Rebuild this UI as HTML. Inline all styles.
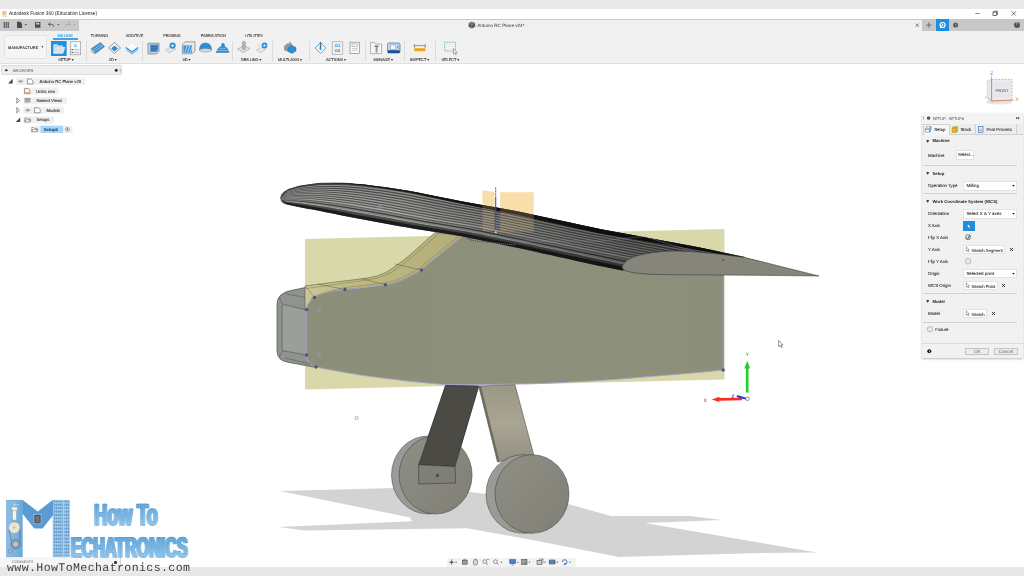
<!DOCTYPE html>
<html lang="en">
<head>
<meta charset="utf-8">
<title>Autodesk Fusion 360 (Education License)</title>
<style>
*{box-sizing:border-box;margin:0;padding:0}
html,body{width:1024px;height:576px;overflow:hidden;background:#fff;text-rendering:geometricPrecision;font-family:"Liberation Sans",sans-serif;color:#333}
.abs{position:absolute}
#root{position:absolute;left:0;top:0;width:1024px;height:576px;overflow:hidden;will-change:transform}
#topstrip{left:0;top:0;width:1024px;height:9px;background:#e9e9e9}
#titlebar{left:0;top:9px;width:1024px;height:9.5px;background:#fff}
#titlebar .t{left:9px;top:2px;font-size:5.5px;line-height:7px;color:#222;white-space:nowrap;transform:scaleX(.865);transform-origin:0 0}
#qat{left:0;top:18.5px;width:1024px;height:12.5px;background:#f0f0f0;border-top:1px solid #c9c9c9}
#qatdark{left:0;top:19px;width:79px;height:12px;background:#c9c9c9}
#ribbon{left:0;top:31px;width:1024px;height:32.5px;background:#f1f1f1;border-bottom:1px solid #e0e0e0}
.tab,.grp,.pl,.box{-webkit-text-stroke:0.1px currentColor}
.tab{font-size:3.9px;line-height:5px;color:#444;white-space:nowrap;letter-spacing:-0.05px}
.grp{font-size:3.9px;line-height:5px;color:#333;white-space:nowrap;letter-spacing:-0.05px}
.sep{width:1px;background:#dcdcdc;top:41px;height:20px}
#browserhdr{left:1px;top:65px;width:121px;height:10px;background:#eeeeee;border:0.5px solid #dedede;border-radius:1px}
.brow{font-size:4.2px;line-height:6px;color:#333;white-space:nowrap;background:#f0f0f0;height:7px;padding-top:0.6px}
#bottombar{left:0;top:567px;width:1024px;height:9px;background:#e8e8e8}
#panel{left:922px;top:113px;width:100.5px;height:244.5px;background:#f1f1f1;box-shadow:0 0.5px 2px rgba(0,0,0,.28)}
.pl{font-size:4.25px;line-height:5px;color:#333;white-space:nowrap;letter-spacing:-0.03px}
.ph{font-size:4.3px;line-height:5px;color:#222;font-weight:bold;white-space:nowrap}
.box{background:#fff;border:0.5px solid #e3e3e3;font-size:4.1px;line-height:5px;color:#333;white-space:nowrap}
#panel .pl{font-size:4.4px}#panel .box{font-size:4.4px}
.psep{left:1px;width:94px;height:1.2px;background:#d2d2d2}
</style>
</head>
<body>
<div id="root">
<div class="abs" id="topstrip"></div>
<div class="abs" id="titlebar"><div class="abs t">Autodesk Fusion 360 (Education License)</div></div>
<div class="abs" id="qat"></div>
<div class="abs" id="qatdark"></div>
<div class="abs" id="ribbon"></div>
<div class="abs" id="browserhdr"></div>
<div class="abs" id="bottombar"></div>
<svg class="abs" style="left:0;top:0" width="1024" height="576" viewBox="0 0 1024 576">
<defs>
<linearGradient id="fus" x1="0" y1="0" x2="1" y2="0">
<stop offset="0" stop-color="#8b8f78"/><stop offset="0.5" stop-color="#8d917c"/><stop offset="1" stop-color="#8c907b"/>
</linearGradient>
<linearGradient id="wheel" x1="0" y1="0" x2="1" y2="1">
<stop offset="0" stop-color="#8f8f86"/><stop offset="1" stop-color="#7f7f76"/>
</linearGradient>
<linearGradient id="legR" x1="0" y1="0" x2="0" y2="1">
<stop offset="0" stop-color="#9a9782"/><stop offset="0.5" stop-color="#a9a594"/><stop offset="1" stop-color="#939083"/>
</linearGradient>
<linearGradient id="wingg" gradientUnits="userSpaceOnUse" x1="400" y1="189" x2="392" y2="226">
<stop offset="0" stop-color="#2a2a2a"/><stop offset="0.12" stop-color="#4c4c4a"/><stop offset="0.3" stop-color="#747472"/><stop offset="0.55" stop-color="#6a6a68"/><stop offset="0.8" stop-color="#5a5a58"/><stop offset="0.92" stop-color="#3a3a38"/><stop offset="1" stop-color="#555"/>
</linearGradient>
<linearGradient id="wdark" gradientUnits="userSpaceOnUse" x1="400" y1="0" x2="640" y2="0"><stop offset="0" stop-color="#000" stop-opacity="0"/><stop offset="1" stop-color="#000" stop-opacity="0.34"/></linearGradient>
<linearGradient id="strip" gradientUnits="userSpaceOnUse" x1="305" y1="0" x2="462" y2="0"><stop offset="0" stop-color="#cbc793"/><stop offset="0.3" stop-color="#bfba85"/><stop offset="1" stop-color="#b2ad79"/></linearGradient>
</defs>
<!-- shadows -->
<polygon fill="#d3d3d3" points="280,491 395,488 470,492 568,504 611,516 690,516 722,520 645,523 817,552.5 761,553 619,557 540,541.5 467,528.2 305,530.5 278.5,527 412,521.2 410,517.4"/>
<!-- yellow stock plane -->
<polygon fill="#d9d8ab" points="305,239 724.5,229 724.5,379.5 305,389.5"/>
<!-- nose box -->
<path d="M306,287.3 L292,290.3 Q277,293 277,304 L277,351 Q277,360.5 288,362.3 L316,367.4 L307,355 L307,310 Z" fill="#8f948e" stroke="#3c3c3a" stroke-width="0.6"/>
<path d="M284,304.6 Q282,304.4 282,306.5 L282,348.5 Q282,350.6 284,350.9 L306.8,355 L306.8,310 Z" fill="#9a9f9a" stroke="#3c3c3a" stroke-width="0.45"/>
<path d="M285,293.6 L305.5,297.6 M285,358 L310,364 M279.5,297 Q280,302 283,304.5 M279.5,357 Q280,353 283,350.8" fill="none" stroke="#3c3c3a" stroke-width="0.4"/>
<!-- fuselage top strip -->
<path d="M305,286 Q335,282 360,279 Q380,277 390,270 Q400,263 410,255 L435,232.5 L462.5,236 L421,270 Q400,283 385,285 Q360,288 345,289.5 Q320,292 314,297.5 Q307,303 306.5,310 L305,310 Z" fill="url(#strip)" stroke="#4a4a3c" stroke-width="0.5"/>
<path d="M361.5,278.6 L385.5,284.8 M395,264 L421.5,270 M317.6,284 L345,289.5 M305.3,286 L314.5,297.5" fill="none" stroke="#55553c" stroke-width="0.45"/>
<path d="M305.5,288.6 Q335,284.6 361,280.8 Q381,278.6 392,272.2 Q402,265 412,257 L437.5,234.6 M310,299 Q316,294 345,287.4 Q362,285.6 385,282.8 Q400,280.8 420,267.6 L459.5,235.6" fill="none" stroke="#6a683c" stroke-width="0.4"/>
<!-- fuselage side -->
<path d="M306.7,310 Q307,303 314,297.5 Q320,292 345,289.5 Q360,288 385,285 Q400,283 421,270 L462.5,236 L516,244 L723.2,262 L723.2,370 Q690,373.5 650,376.5 Q600,381 575,381.8 Q540,384 516,384 Q480,385 445,384.5 Q410,382 360,375 Q330,370 316,367 Q307,364 306.7,355 Z" fill="url(#fus)" stroke="#a8a0cc" stroke-width="0.9"/>
<line x1="723.5" y1="260.5" x2="723.5" y2="370" stroke="#948cc6" stroke-width="1.1"/>
<!-- legs -->
<polygon points="445.5,385.5 478.7,386 455,466.5 418.7,464.7" fill="#4b4a45" stroke="#2c2c2a" stroke-width="0.5"/>
<!-- left wheel -->
<ellipse cx="428" cy="475" rx="36.5" ry="39" fill="#9a9b96" stroke="#3a3a38" stroke-width="0.5"/>
<ellipse cx="435.6" cy="475" rx="36.5" ry="39" fill="url(#wheel)" stroke="#3a3a38" stroke-width="0.5"/>
<polygon points="445.5,385.5 478.7,386 455,466.5 418.7,464.7" fill="#4b4a45" stroke="#2c2c2a" stroke-width="0.5"/>
<polygon points="418.7,464.7 455,466.5 455.7,483 418.7,484" fill="#7f7f75" stroke="#2c2c2a" stroke-width="0.5"/>
<circle cx="437.5" cy="475.5" r="1.3" fill="#555" stroke="#222" stroke-width="0.4"/>
<polygon points="478.7,386 515,384.7 533.7,454.7 497.5,462" fill="url(#legR)" stroke="#3a3a36" stroke-width="0.5"/>
<polygon points="478.7,386 481,386 499.5,461.5 497.5,462" fill="#6d6a5e"/>
<!-- right wheel -->
<ellipse cx="523" cy="494" rx="37" ry="39.3" fill="#9a9b96" stroke="#3a3a38" stroke-width="0.5"/>
<ellipse cx="532" cy="494" rx="37" ry="39.3" fill="url(#wheel)" stroke="#3a3a38" stroke-width="0.5"/>
<g fill="#fbe1b2">
<polygon points="482.5,190.2 494.5,192 494.5,231 482.5,231"/><polygon points="500.2,192.3 533.8,192.3 533.8,231 500.2,231"/>
</g>
<!-- wing -->
<path d="M280.8,197.5 L281.5,194.5 L284.0,191.8 L289.0,189.2 L300.0,186.0 L320.0,183.3 L310.0,209.0 L300.0,207.0 L291.0,205.2 L284.0,203.4 L281.5,201.5 L280.8,198.5 Z" fill="#5c5c5a" stroke="#333" stroke-width="0.5" stroke-linejoin="round"/>
<path d="M280.8,197.5 L287.8,189.8 L298.4,186.5 L309.3,184.7 L320.2,183.3 L331.3,183.1 L342.4,183.1 L353.4,183.7 L364.5,184.5 L375.5,185.9 L386.4,187.2 L397.4,189.0 L408.3,190.7 L419.2,192.8 L430.0,195.0 L440.9,197.2 L451.7,199.3 L462.6,201.5 L473.5,203.4 L484.4,205.4 L495.3,207.3 L506.2,209.3 L517.1,211.2 L527.9,213.6 L538.7,215.9 L549.6,218.2 L560.4,220.5 L571.2,222.8 L582.0,225.2 L592.9,227.5 L603.7,229.7 L614.6,231.7 L625.5,233.7 L636.4,235.7 L647.3,237.7 L658.1,239.8 L669.0,241.8 L679.9,243.8 L690.8,245.8 L701.7,247.9 L712.5,250.1 L723.3,252.4 L734.2,254.7 L745.0,257.0 L622.5,270.5 L614.5,268.9 L606.5,267.3 L598.5,265.7 L590.5,263.9 L582.5,262.2 L574.5,260.4 L566.5,258.6 L558.6,256.9 L550.6,255.1 L542.6,253.4 L534.6,251.6 L526.6,249.8 L518.7,248.1 L510.7,246.4 L502.7,244.8 L494.7,243.1 L486.7,241.5 L478.6,239.8 L470.6,238.2 L462.6,236.5 L454.6,235.1 L446.5,233.8 L438.5,232.6 L430.4,231.3 L422.3,230.0 L414.2,228.7 L406.2,227.3 L398.1,225.9 L390.1,224.4 L382.1,223.0 L374.0,221.5 L366.0,220.1 L357.9,218.6 L349.9,217.0 L341.9,215.4 L333.9,213.8 L325.9,212.2 L317.9,210.6 L309.9,209.0 L301.9,207.4 L293.8,205.8 L285.9,203.9 L280.8,198.5 Z" fill="#666664"/>
<path d="M280.8,197.5 L287.8,189.8 L298.4,186.5 L309.3,184.7 L320.2,183.3 L331.3,183.1 L342.4,183.1 L353.4,183.7 L364.5,184.5 L375.5,185.9 L386.4,187.2 L397.4,189.0 L408.3,190.7 L419.2,192.8 L430.0,195.0 L440.9,197.2 L451.7,199.3 L462.6,201.5 L473.5,203.4 L484.4,205.4 L495.3,207.3 L506.2,209.3 L517.1,211.2 L527.9,213.6 L538.7,215.9 L549.6,218.2 L560.4,220.5 L571.2,222.8 L582.0,225.2 L592.9,227.5 L603.7,229.7 L614.6,231.7 L625.5,233.7 L636.4,235.7 L647.3,237.7 L658.1,239.8 L669.0,241.8 L679.9,243.8 L690.8,245.8 L701.7,247.9 L712.5,250.1 L723.3,252.4 L734.2,254.7 L745.0,257.0 L740.1,257.5 L729.4,255.3 L718.7,253.0 L707.9,250.8 L697.2,248.5 L686.5,246.5 L675.7,244.4 L664.9,242.4 L654.2,240.4 L643.4,238.4 L632.6,236.4 L621.8,234.4 L611.1,232.4 L600.3,230.4 L589.6,228.2 L578.9,225.9 L568.2,223.6 L557.4,221.4 L546.7,219.1 L536.0,216.8 L525.3,214.5 L514.6,212.2 L503.8,210.2 L493.0,208.3 L482.2,206.4 L471.5,204.5 L460.7,202.6 L449.9,200.5 L439.2,198.3 L428.4,196.2 L417.7,194.0 L406.9,192.0 L396.1,190.2 L385.3,188.5 L374.4,187.1 L363.6,185.8 L352.7,184.9 L341.7,184.3 L330.8,184.2 L319.8,184.3 L309.0,185.7 L298.2,187.2 L287.7,190.4 L280.8,197.5 Z" fill="#444442"/>
<path d="M280.8,197.5 L287.7,190.4 L298.2,187.2 L309.0,185.7 L319.8,184.3 L330.8,184.2 L341.7,184.3 L352.7,184.9 L363.6,185.8 L374.4,187.1 L385.3,188.5 L396.1,190.2 L406.9,192.0 L417.7,194.0 L428.4,196.2 L439.2,198.3 L449.9,200.5 L460.7,202.6 L471.5,204.5 L482.2,206.4 L493.0,208.3 L503.8,210.2 L514.6,212.2 L525.3,214.5 L536.0,216.8 L546.7,219.1 L557.4,221.4 L568.2,223.6 L578.9,225.9 L589.6,228.2 L600.3,230.4 L611.1,232.4 L621.8,234.4 L632.6,236.4 L643.4,238.4 L654.2,240.4 L664.9,242.4 L675.7,244.4 L686.5,246.5 L697.2,248.5 L707.9,250.8 L718.7,253.0 L729.4,255.3 L740.1,257.5 L720.5,259.7 L710.2,257.6 L700.0,255.4 L689.7,253.2 L679.4,251.1 L669.1,249.1 L658.8,247.1 L648.5,245.1 L638.2,243.2 L627.9,241.2 L617.6,239.3 L607.3,237.3 L597.0,235.3 L586.7,233.4 L576.4,231.3 L566.2,229.1 L555.9,226.9 L545.6,224.7 L535.4,222.5 L525.1,220.3 L514.9,218.2 L504.6,216.0 L494.3,214.2 L483.9,212.4 L473.6,210.5 L463.3,208.7 L452.9,206.9 L442.6,204.9 L432.3,202.9 L422.0,200.9 L411.8,198.9 L401.5,196.9 L391.1,195.2 L380.7,193.5 L370.4,192.1 L360.0,190.7 L349.5,189.7 L339.1,188.9 L328.6,188.6 L318.2,188.4 L307.8,189.3 L297.5,190.3 L287.4,192.6 L280.8,197.7 Z" fill="#6c6e6a"/>
<path d="M280.8,197.7 L287.4,192.6 L297.5,190.3 L307.8,189.3 L318.2,188.4 L328.6,188.6 L339.1,188.9 L349.5,189.7 L360.0,190.7 L370.4,192.1 L380.7,193.5 L391.1,195.2 L401.5,196.9 L411.8,198.9 L422.0,200.9 L432.3,202.9 L442.6,204.9 L452.9,206.9 L463.3,208.7 L473.6,210.5 L483.9,212.4 L494.3,214.2 L504.6,216.0 L514.9,218.2 L525.1,220.3 L535.4,222.5 L545.6,224.7 L555.9,226.9 L566.2,229.1 L576.4,231.3 L586.7,233.4 L597.0,235.3 L607.3,237.3 L617.6,239.3 L627.9,241.2 L638.2,243.2 L648.5,245.1 L658.8,247.1 L669.1,249.1 L679.4,251.1 L689.7,253.2 L700.0,255.4 L710.2,257.6 L720.5,259.7 L708.2,261.0 L698.3,259.0 L688.3,256.9 L678.3,254.8 L668.3,252.7 L658.3,250.7 L648.3,248.8 L638.3,246.8 L628.3,244.9 L618.3,243.0 L608.2,241.0 L598.2,239.1 L588.2,237.1 L578.2,235.2 L568.2,233.2 L558.2,231.0 L548.2,228.9 L538.3,226.8 L528.3,224.7 L518.3,222.6 L508.3,220.4 L498.3,218.4 L488.3,216.6 L478.2,214.9 L468.2,213.1 L458.1,211.4 L448.1,209.6 L438.1,207.7 L428.1,205.8 L418.1,203.8 L408.0,201.9 L398.0,200.0 L388.0,198.3 L377.9,196.6 L367.8,195.2 L357.7,193.8 L347.6,192.7 L337.4,191.8 L327.3,191.4 L317.1,191.0 L307.0,191.5 L297.0,192.3 L287.2,194.0 L280.8,197.8 Z" fill="#747672"/>
<path d="M280.8,197.8 L287.2,194.0 L297.0,192.3 L307.0,191.5 L317.1,191.0 L327.3,191.4 L337.4,191.8 L347.6,192.7 L357.7,193.8 L367.8,195.2 L377.9,196.6 L388.0,198.3 L398.0,200.0 L408.0,201.9 L418.1,203.8 L428.1,205.8 L438.1,207.7 L448.1,209.6 L458.1,211.4 L468.2,213.1 L478.2,214.9 L488.3,216.6 L498.3,218.4 L508.3,220.4 L518.3,222.6 L528.3,224.7 L538.3,226.8 L548.2,228.9 L558.2,231.0 L568.2,233.2 L578.2,235.2 L588.2,237.1 L598.2,239.1 L608.2,241.0 L618.3,243.0 L628.3,244.9 L638.3,246.8 L648.3,248.8 L658.3,250.7 L668.3,252.7 L678.3,254.8 L688.3,256.9 L698.3,259.0 L708.2,261.0 L671.5,265.1 L662.4,263.2 L653.2,261.3 L644.1,259.5 L635.0,257.5 L625.8,255.6 L616.7,253.8 L607.5,251.9 L598.4,250.0 L589.3,248.2 L580.1,246.3 L571.0,244.5 L561.8,242.6 L552.7,240.7 L543.5,238.8 L534.4,236.9 L525.3,235.0 L516.1,233.1 L507.0,231.2 L497.9,229.3 L488.7,227.3 L479.6,225.6 L470.4,224.0 L461.2,222.5 L452.0,220.9 L442.8,219.3 L433.6,217.8 L424.4,216.1 L415.2,214.4 L406.1,212.7 L396.9,210.9 L387.7,209.2 L378.5,207.6 L369.3,206.0 L360.1,204.5 L350.9,203.0 L341.7,201.7 L332.5,200.6 L323.3,199.6 L314.0,198.7 L304.8,198.3 L295.6,198.1 L286.7,198.3 L280.8,198.1 Z" fill="#7e807c"/>
<path d="M280.8,198.1 L286.7,198.3 L295.6,198.1 L304.8,198.3 L314.0,198.7 L323.3,199.6 L332.5,200.6 L341.7,201.7 L350.9,203.0 L360.1,204.5 L369.3,206.0 L378.5,207.6 L387.7,209.2 L396.9,210.9 L406.1,212.7 L415.2,214.4 L424.4,216.1 L433.6,217.8 L442.8,219.3 L452.0,220.9 L461.2,222.5 L470.4,224.0 L479.6,225.6 L488.7,227.3 L497.9,229.3 L507.0,231.2 L516.1,233.1 L525.3,235.0 L534.4,236.9 L543.5,238.8 L552.7,240.7 L561.8,242.6 L571.0,244.5 L580.1,246.3 L589.3,248.2 L598.4,250.0 L607.5,251.9 L616.7,253.8 L625.8,255.6 L635.0,257.5 L644.1,259.5 L653.2,261.3 L662.4,263.2 L671.5,265.1 L659.2,266.4 L650.4,264.6 L641.5,262.8 L632.7,261.0 L623.8,259.1 L615.0,257.2 L606.1,255.4 L597.3,253.6 L588.4,251.7 L579.6,249.9 L570.7,248.1 L561.9,246.2 L553.0,244.4 L544.2,242.6 L535.3,240.7 L526.5,238.9 L517.6,237.0 L508.8,235.2 L499.9,233.3 L491.1,231.5 L482.2,229.6 L473.3,228.0 L464.4,226.5 L455.5,225.0 L446.6,223.5 L437.7,222.0 L428.8,220.5 L419.9,218.9 L411.0,217.3 L402.1,215.6 L393.2,213.9 L384.3,212.3 L375.4,210.7 L366.5,209.2 L357.6,207.6 L348.7,206.1 L339.8,204.7 L330.8,203.5 L321.9,202.3 L313.0,201.3 L304.1,200.6 L295.2,200.0 L286.5,199.7 L280.8,198.2 Z" fill="#969894"/>
<path d="M280.8,198.2 L286.5,199.7 L295.2,200.0 L304.1,200.6 L313.0,201.3 L321.9,202.3 L330.8,203.5 L339.8,204.7 L348.7,206.1 L357.6,207.6 L366.5,209.2 L375.4,210.7 L384.3,212.3 L393.2,213.9 L402.1,215.6 L411.0,217.3 L419.9,218.9 L428.8,220.5 L437.7,222.0 L446.6,223.5 L455.5,225.0 L464.4,226.5 L473.3,228.0 L482.2,229.6 L491.1,231.5 L499.9,233.3 L508.8,235.2 L517.6,237.0 L526.5,238.9 L535.3,240.7 L544.2,242.6 L553.0,244.4 L561.9,246.2 L570.7,248.1 L579.6,249.9 L588.4,251.7 L597.3,253.6 L606.1,255.4 L615.0,257.2 L623.8,259.1 L632.7,261.0 L641.5,262.8 L650.4,264.6 L659.2,266.4 L647.0,267.8 L638.4,266.1 L629.8,264.3 L621.3,262.6 L612.7,260.7 L604.2,258.9 L595.6,257.1 L587.0,255.3 L578.5,253.5 L569.9,251.7 L561.4,249.8 L552.8,248.0 L544.2,246.2 L535.7,244.4 L527.1,242.6 L518.5,240.8 L510.0,239.1 L501.4,237.3 L492.8,235.5 L484.3,233.7 L475.7,231.9 L467.1,230.4 L458.5,228.9 L449.8,227.5 L441.2,226.1 L432.6,224.7 L423.9,223.2 L415.3,221.7 L406.7,220.1 L398.1,218.5 L389.5,216.9 L380.9,215.4 L372.3,213.9 L363.6,212.3 L355.0,210.8 L346.4,209.2 L337.8,207.8 L329.2,206.4 L320.6,205.1 L311.9,203.8 L303.3,202.8 L294.7,201.9 L286.3,201.1 L280.8,198.3 Z" fill="#5a5c58"/>
<path d="M280.8,198.3 L286.3,201.1 L294.7,201.9 L303.3,202.8 L311.9,203.8 L320.6,205.1 L329.2,206.4 L337.8,207.8 L346.4,209.2 L355.0,210.8 L363.6,212.3 L372.3,213.9 L380.9,215.4 L389.5,216.9 L398.1,218.5 L406.7,220.1 L415.3,221.7 L423.9,223.2 L432.6,224.7 L441.2,226.1 L449.8,227.5 L458.5,228.9 L467.1,230.4 L475.7,231.9 L484.3,233.7 L492.8,235.5 L501.4,237.3 L510.0,239.1 L518.5,240.8 L527.1,242.6 L535.7,244.4 L544.2,246.2 L552.8,248.0 L561.4,249.8 L569.9,251.7 L578.5,253.5 L587.0,255.3 L595.6,257.1 L604.2,258.9 L612.7,260.7 L621.3,262.6 L629.8,264.3 L638.4,266.1 L647.0,267.8 L642.1,268.3 L633.6,266.6 L625.2,264.9 L616.7,263.2 L608.3,261.3 L599.8,259.5 L591.4,257.7 L582.9,255.9 L574.5,254.1 L566.0,252.3 L557.6,250.5 L549.2,248.7 L540.7,246.9 L532.3,245.1 L523.8,243.4 L515.4,241.6 L506.9,239.9 L498.5,238.1 L490.0,236.4 L481.5,234.6 L473.1,232.9 L464.6,231.3 L456.1,229.9 L447.5,228.5 L439.0,227.1 L430.5,225.7 L422.0,224.3 L413.5,222.8 L405.0,221.3 L396.5,219.7 L388.0,218.1 L379.5,216.6 L371.0,215.1 L362.5,213.6 L354.0,212.0 L345.5,210.4 L337.0,209.0 L328.5,207.5 L320.0,206.2 L311.5,204.9 L303.0,203.8 L294.6,202.7 L286.2,201.6 L280.8,198.3 Z" fill="#9a9c98"/>
<path d="M280.8,198.3 L286.2,201.6 L294.6,202.7 L303.0,203.8 L311.5,204.9 L320.0,206.2 L328.5,207.5 L337.0,209.0 L345.5,210.4 L354.0,212.0 L362.5,213.6 L371.0,215.1 L379.5,216.6 L388.0,218.1 L396.5,219.7 L405.0,221.3 L413.5,222.8 L422.0,224.3 L430.5,225.7 L439.0,227.1 L447.5,228.5 L456.1,229.9 L464.6,231.3 L473.1,232.9 L481.5,234.6 L490.0,236.4 L498.5,238.1 L506.9,239.9 L515.4,241.6 L523.8,243.4 L532.3,245.1 L540.7,246.9 L549.2,248.7 L557.6,250.5 L566.0,252.3 L574.5,254.1 L582.9,255.9 L591.4,257.7 L599.8,259.5 L608.3,261.3 L616.7,263.2 L625.2,264.9 L633.6,266.6 L642.1,268.3 L634.8,269.2 L626.5,267.5 L618.2,265.8 L609.9,264.1 L601.6,262.3 L593.3,260.5 L585.1,258.7 L576.8,257.0 L568.5,255.2 L560.2,253.4 L552.0,251.6 L543.7,249.8 L535.4,248.0 L527.2,246.2 L518.9,244.5 L510.6,242.8 L502.3,241.1 L494.0,239.4 L485.7,237.7 L477.5,236.0 L469.2,234.2 L460.8,232.7 L452.5,231.4 L444.1,230.0 L435.8,228.7 L427.4,227.3 L419.1,226.0 L410.7,224.5 L402.4,223.0 L394.1,221.5 L385.8,220.0 L377.4,218.4 L369.1,217.0 L360.8,215.5 L352.5,213.9 L344.2,212.3 L335.9,210.8 L327.5,209.3 L319.2,207.8 L310.9,206.4 L302.6,205.1 L294.3,203.8 L286.1,202.5 L280.8,198.4 Z" fill="#4a4a48"/>
<path d="M280.8,198.4 L286.1,202.5 L294.3,203.8 L302.6,205.1 L310.9,206.4 L319.2,207.8 L327.5,209.3 L335.9,210.8 L344.2,212.3 L352.5,213.9 L360.8,215.5 L369.1,217.0 L377.4,218.4 L385.8,220.0 L394.1,221.5 L402.4,223.0 L410.7,224.5 L419.1,226.0 L427.4,227.3 L435.8,228.7 L444.1,230.0 L452.5,231.4 L460.8,232.7 L469.2,234.2 L477.5,236.0 L485.7,237.7 L494.0,239.4 L502.3,241.1 L510.6,242.8 L518.9,244.5 L527.2,246.2 L535.4,248.0 L543.7,249.8 L552.0,251.6 L560.2,253.4 L568.5,255.2 L576.8,257.0 L585.1,258.7 L593.3,260.5 L601.6,262.3 L609.9,264.1 L618.2,265.8 L626.5,267.5 L634.8,269.2 L622.5,270.5 L614.5,268.9 L606.5,267.3 L598.5,265.7 L590.5,263.9 L582.5,262.2 L574.5,260.4 L566.5,258.6 L558.6,256.9 L550.6,255.1 L542.6,253.4 L534.6,251.6 L526.6,249.8 L518.7,248.1 L510.7,246.4 L502.7,244.8 L494.7,243.1 L486.7,241.5 L478.6,239.8 L470.6,238.2 L462.6,236.5 L454.6,235.1 L446.5,233.8 L438.5,232.6 L430.4,231.3 L422.3,230.0 L414.2,228.7 L406.2,227.3 L398.1,225.9 L390.1,224.4 L382.1,223.0 L374.0,221.5 L366.0,220.1 L357.9,218.6 L349.9,217.0 L341.9,215.4 L333.9,213.8 L325.9,212.2 L317.9,210.6 L309.9,209.0 L301.9,207.4 L293.8,205.8 L285.9,203.9 L280.8,198.5 Z" fill="#1c1c1c"/>
<path d="M280.8,197.6 L287.7,190.5 L298.1,187.4 L308.9,185.9 L319.7,184.6 L330.6,184.5 L341.6,184.6 L352.5,185.2 L363.3,186.1 L374.2,187.4 L385.0,188.8 L395.8,190.5 L406.6,192.3 L417.3,194.3 L428.0,196.5 L438.8,198.6 L449.5,200.7 L460.2,202.8 L470.9,204.7 L481.7,206.7 L492.5,208.6 L503.2,210.5 L514.0,212.4 L524.7,214.7 L535.3,217.0 L546.0,219.3 L556.7,221.6 L567.4,223.8 L578.1,226.1 L588.8,228.4 L599.5,230.6 L610.2,232.6 L620.9,234.6 L631.7,236.6 L642.4,238.6 L653.2,240.6 L663.9,242.6 L674.6,244.6 L685.4,246.6 L696.1,248.7 L706.8,250.9 L717.5,253.2 L728.2,255.4 L738.9,257.7" fill="none" stroke="#141414" stroke-width="0.5" stroke-opacity="0.9"/>
<path d="M280.8,197.6 L287.7,191.0 L298.0,188.1 L308.6,186.7 L319.4,185.5 L330.2,185.5 L341.0,185.6 L351.8,186.2 L362.6,187.2 L373.3,188.5 L384.0,189.9 L394.7,191.6 L405.4,193.3 L416.0,195.4 L426.6,197.5 L437.3,199.6 L447.9,201.7 L458.5,203.8 L469.2,205.7 L479.8,207.6 L490.5,209.5 L501.1,211.3 L511.8,213.3 L522.4,215.5 L533.0,217.8 L543.5,220.0 L554.1,222.3 L564.7,224.6 L575.3,226.8 L585.9,229.1 L596.5,231.3 L607.1,233.2 L617.8,235.2 L628.4,237.2 L639.0,239.2 L649.7,241.2 L660.3,243.2 L671.0,245.2 L681.6,247.2 L692.2,249.2 L702.8,251.5 L713.4,253.7 L724.0,255.9 L734.6,258.1" fill="none" stroke="#c6c8c4" stroke-width="0.5" stroke-opacity="0.9"/>
<path d="M280.8,197.6 L287.6,191.5 L297.8,188.8 L308.4,187.5 L319.0,186.4 L329.7,186.4 L340.4,186.6 L351.1,187.3 L361.8,188.2 L372.4,189.6 L383.0,191.0 L393.6,192.7 L404.2,194.4 L414.7,196.5 L425.2,198.5 L435.8,200.6 L446.3,202.7 L456.8,204.7 L467.4,206.6 L477.9,208.5 L488.5,210.3 L499.0,212.2 L509.6,214.1 L520.1,216.3 L530.6,218.6 L541.1,220.8 L551.5,223.0 L562.0,225.3 L572.5,227.5 L583.0,229.7 L593.5,231.9 L604.0,233.9 L614.6,235.9 L625.1,237.8 L635.7,239.8 L646.2,241.8 L656.7,243.8 L667.3,245.8 L677.8,247.8 L688.3,249.8 L698.8,252.0 L709.3,254.2 L719.8,256.4 L730.3,258.6" fill="none" stroke="#141414" stroke-width="0.5" stroke-opacity="0.9"/>
<path d="M280.8,197.7 L287.5,192.0 L297.7,189.5 L308.1,188.3 L318.6,187.3 L329.2,187.4 L339.8,187.6 L350.4,188.3 L361.0,189.3 L371.5,190.7 L382.0,192.1 L392.5,193.8 L403.0,195.5 L413.4,197.5 L423.8,199.6 L434.3,201.6 L444.7,203.7 L455.1,205.7 L465.6,207.5 L476.0,209.4 L486.5,211.2 L497.0,213.1 L507.4,214.9 L517.8,217.1 L528.2,219.3 L538.6,221.5 L549.0,223.8 L559.3,226.0 L569.7,228.2 L580.1,230.4 L590.5,232.5 L601.0,234.5 L611.4,236.5 L621.8,238.5 L632.3,240.4 L642.7,242.4 L653.1,244.4 L663.6,246.4 L674.0,248.3 L684.4,250.3 L694.8,252.5 L705.2,254.7 L715.6,256.9 L726.0,259.1" fill="none" stroke="#c6c8c4" stroke-width="0.5" stroke-opacity="0.9"/>
<path d="M280.8,197.7 L287.5,192.5 L297.5,190.1 L307.9,189.0 L318.3,188.2 L328.8,188.3 L339.3,188.6 L349.7,189.4 L360.2,190.4 L370.6,191.8 L381.0,193.2 L391.4,194.9 L401.8,196.6 L412.1,198.6 L422.4,200.6 L432.8,202.6 L443.1,204.7 L453.4,206.6 L463.8,208.5 L474.1,210.3 L484.5,212.1 L494.9,213.9 L505.2,215.8 L515.5,217.9 L525.8,220.1 L536.1,222.3 L546.4,224.5 L556.7,226.7 L567.0,228.9 L577.2,231.1 L587.6,233.2 L597.9,235.1 L608.2,237.1 L618.6,239.1 L628.9,241.0 L639.2,243.0 L649.6,245.0 L659.9,246.9 L670.2,248.9 L680.5,250.9 L690.8,253.1 L701.1,255.3 L711.4,257.4 L721.7,259.6" fill="none" stroke="#141414" stroke-width="0.5" stroke-opacity="0.9"/>
<path d="M280.8,197.7 L287.4,193.0 L297.3,190.8 L307.6,189.8 L317.9,189.1 L328.3,189.3 L338.7,189.7 L349.0,190.4 L359.4,191.5 L369.7,192.9 L380.0,194.3 L390.3,196.0 L400.6,197.7 L410.8,199.6 L421.0,201.6 L431.3,203.6 L441.5,205.6 L451.7,207.6 L462.0,209.4 L472.2,211.2 L482.5,213.0 L492.8,214.8 L503.0,216.6 L513.2,218.7 L523.4,220.9 L533.6,223.1 L543.8,225.2 L554.0,227.4 L564.2,229.6 L574.4,231.7 L584.6,233.8 L594.8,235.8 L605.0,237.7 L615.3,239.7 L625.5,241.7 L635.7,243.6 L646.0,245.6 L656.2,247.5 L666.4,249.5 L676.7,251.5 L686.8,253.6 L697.0,255.8 L707.2,257.9 L717.4,260.0" fill="none" stroke="#c6c8c4" stroke-width="0.5" stroke-opacity="0.9"/>
<path d="M280.8,197.8 L287.3,193.5 L297.2,191.5 L307.3,190.6 L317.5,190.0 L327.8,190.3 L338.1,190.7 L348.4,191.5 L358.6,192.6 L368.8,193.9 L379.0,195.4 L389.2,197.1 L399.4,198.7 L409.5,200.7 L419.7,202.7 L429.8,204.6 L439.9,206.6 L450.0,208.5 L460.2,210.3 L470.4,212.1 L480.5,213.9 L490.7,215.6 L500.8,217.4 L510.9,219.5 L521.0,221.7 L531.1,223.8 L541.2,226.0 L551.3,228.1 L561.4,230.2 L571.5,232.4 L581.6,234.5 L591.7,236.4 L601.9,238.4 L612.0,240.3 L622.1,242.3 L632.2,244.2 L642.4,246.2 L652.5,248.1 L662.6,250.0 L672.8,252.0 L682.9,254.2 L693.0,256.3 L703.1,258.4 L713.1,260.5" fill="none" stroke="#141414" stroke-width="0.5" stroke-opacity="0.9"/>
<path d="M280.8,197.8 L287.3,194.0 L297.0,192.2 L307.1,191.4 L317.2,190.9 L327.4,191.2 L337.5,191.7 L347.7,192.6 L357.8,193.6 L367.9,195.0 L378.0,196.5 L388.1,198.2 L398.2,199.8 L408.2,201.7 L418.3,203.7 L428.3,205.6 L438.3,207.6 L448.3,209.5 L458.4,211.2 L468.5,213.0 L478.5,214.8 L488.6,216.5 L498.7,218.3 L508.7,220.3 L518.7,222.5 L528.6,224.6 L538.6,226.7 L548.6,228.8 L558.6,230.9 L568.6,233.1 L578.6,235.1 L588.6,237.1 L598.7,239.0 L608.7,240.9 L618.7,242.9 L628.8,244.8 L638.8,246.7 L648.8,248.7 L658.9,250.6 L668.9,252.6 L678.9,254.7 L688.9,256.8 L698.9,258.9 L708.9,261.0" fill="none" stroke="#c6c8c4" stroke-width="0.5" stroke-opacity="0.9"/>
<path d="M280.8,197.8 L287.2,194.5 L296.9,192.8 L306.8,192.2 L316.8,191.8 L326.9,192.2 L336.9,192.7 L347.0,193.6 L357.0,194.7 L367.0,196.1 L377.0,197.6 L387.0,199.2 L397.0,200.9 L406.9,202.8 L416.9,204.7 L426.8,206.6 L436.7,208.6 L446.6,210.4 L456.6,212.2 L466.6,213.9 L476.5,215.6 L486.5,217.4 L496.5,219.1 L506.4,221.1 L516.3,223.2 L526.2,225.3 L536.1,227.4 L546.0,229.5 L555.8,231.6 L565.7,233.7 L575.6,235.8 L585.6,237.7 L595.5,239.6 L605.4,241.5 L615.4,243.5 L625.3,245.4 L635.2,247.3 L645.1,249.3 L655.1,251.2 L665.0,253.2 L674.9,255.3 L684.8,257.3 L694.7,259.4 L704.6,261.5" fill="none" stroke="#141414" stroke-width="0.5" stroke-opacity="0.9"/>
<path d="M280.8,197.9 L287.1,194.9 L296.7,193.5 L306.6,193.0 L316.5,192.7 L326.4,193.1 L336.4,193.7 L346.3,194.7 L356.2,195.8 L366.1,197.2 L376.0,198.7 L385.9,200.3 L395.8,202.0 L405.6,203.8 L415.5,205.7 L425.3,207.6 L435.1,209.6 L445.0,211.4 L454.8,213.1 L464.7,214.8 L474.6,216.5 L484.4,218.2 L494.3,220.0 L504.1,221.9 L513.9,224.0 L523.7,226.1 L533.5,228.2 L543.3,230.2 L553.1,232.3 L562.9,234.4 L572.7,236.4 L582.5,238.3 L592.3,240.2 L602.1,242.2 L612.0,244.1 L621.8,246.0 L631.6,247.9 L641.4,249.8 L651.3,251.8 L661.1,253.7 L670.9,255.8 L680.7,257.9 L690.5,259.9 L700.3,261.9" fill="none" stroke="#c6c8c4" stroke-width="0.5" stroke-opacity="0.9"/>
<path d="M280.8,197.9 L287.1,195.4 L296.5,194.2 L306.3,193.8 L316.1,193.6 L325.9,194.1 L335.8,194.7 L345.6,195.7 L355.4,196.9 L365.2,198.3 L375.0,199.8 L384.8,201.4 L394.6,203.0 L404.3,204.9 L414.1,206.8 L423.8,208.7 L433.5,210.5 L443.3,212.4 L453.0,214.0 L462.8,215.7 L472.6,217.4 L482.3,219.1 L492.1,220.8 L501.8,222.7 L511.5,224.8 L521.2,226.8 L530.9,228.9 L540.6,230.9 L550.3,233.0 L560.0,235.0 L569.7,237.0 L579.4,239.0 L589.1,240.9 L598.9,242.8 L608.6,244.7 L618.3,246.6 L628.0,248.5 L637.8,250.4 L647.5,252.3 L657.2,254.3 L666.9,256.3 L676.6,258.4 L686.3,260.4 L696.0,262.4" fill="none" stroke="#141414" stroke-width="0.5" stroke-opacity="0.9"/>
<path d="M280.8,197.9 L287.0,195.9 L296.4,194.9 L306.0,194.6 L315.7,194.5 L325.5,195.1 L335.2,195.8 L344.9,196.8 L354.7,198.0 L364.4,199.4 L374.0,200.9 L383.7,202.5 L393.4,204.1 L403.0,205.9 L412.7,207.8 L422.3,209.7 L431.9,211.5 L441.6,213.3 L451.2,215.0 L460.9,216.6 L470.6,218.3 L480.2,219.9 L489.9,221.6 L499.5,223.6 L509.1,225.6 L518.7,227.6 L528.3,229.6 L537.9,231.7 L547.5,233.7 L557.1,235.7 L566.7,237.7 L576.3,239.6 L586.0,241.5 L595.6,243.4 L605.2,245.3 L614.8,247.2 L624.4,249.1 L634.1,251.0 L643.7,252.9 L653.3,254.8 L662.9,256.9 L672.5,258.9 L682.1,260.9 L691.7,262.9" fill="none" stroke="#c6c8c4" stroke-width="0.5" stroke-opacity="0.9"/>
<path d="M280.8,198.0 L286.9,196.4 L296.2,195.5 L305.8,195.4 L315.4,195.4 L325.0,196.0 L334.6,196.8 L344.3,197.8 L353.9,199.0 L363.5,200.5 L373.0,202.0 L382.6,203.6 L392.2,205.2 L401.7,207.0 L411.3,208.8 L420.8,210.7 L430.3,212.5 L439.9,214.3 L449.4,215.9 L459.0,217.5 L468.6,219.2 L478.2,220.8 L487.7,222.5 L497.2,224.4 L506.7,226.4 L516.2,228.4 L525.7,230.4 L535.2,232.4 L544.7,234.4 L554.2,236.4 L563.7,238.3 L573.3,240.2 L582.8,242.1 L592.3,244.0 L601.8,245.9 L611.3,247.8 L620.9,249.7 L630.4,251.6 L639.9,253.5 L649.4,255.4 L658.9,257.4 L668.4,259.4 L677.9,261.4 L687.4,263.3" fill="none" stroke="#141414" stroke-width="0.5" stroke-opacity="0.9"/>
<path d="M280.8,198.0 L286.8,196.9 L296.1,196.2 L305.5,196.2 L315.0,196.3 L324.5,197.0 L334.1,197.8 L343.6,198.9 L353.1,200.1 L362.6,201.6 L372.1,203.1 L381.5,204.7 L391.0,206.3 L400.4,208.1 L409.9,209.9 L419.3,211.7 L428.7,213.5 L438.2,215.2 L447.7,216.8 L457.1,218.4 L466.6,220.1 L476.1,221.7 L485.5,223.3 L495.0,225.2 L504.4,227.1 L513.8,229.1 L523.2,231.1 L532.6,233.1 L542.0,235.1 L551.4,237.0 L560.8,239.0 L570.2,240.9 L579.6,242.8 L589.0,244.6 L598.4,246.5 L607.9,248.4 L617.3,250.3 L626.7,252.2 L636.1,254.1 L645.5,256.0 L654.9,258.0 L664.3,259.9 L673.7,261.9 L683.1,263.8" fill="none" stroke="#c6c8c4" stroke-width="0.5" stroke-opacity="0.9"/>
<path d="M280.8,198.0 L286.8,197.4 L295.9,196.9 L305.3,197.0 L314.6,197.2 L324.1,198.0 L333.5,198.8 L342.9,199.9 L352.3,201.2 L361.7,202.7 L371.1,204.2 L380.4,205.8 L389.8,207.4 L399.1,209.1 L408.5,210.9 L417.8,212.7 L427.1,214.4 L436.5,216.2 L445.9,217.8 L455.2,219.3 L464.6,220.9 L474.0,222.5 L483.3,224.1 L492.7,226.0 L502.0,227.9 L511.3,229.9 L520.6,231.8 L529.9,233.8 L539.2,235.7 L548.5,237.7 L557.8,239.6 L567.1,241.5 L576.4,243.4 L585.7,245.3 L595.1,247.1 L604.4,249.0 L613.7,250.9 L623.0,252.8 L632.3,254.6 L641.6,256.5 L650.9,258.5 L660.2,260.5 L669.5,262.4 L678.9,264.3" fill="none" stroke="#141414" stroke-width="0.5" stroke-opacity="0.9"/>
<path d="M280.8,198.1 L286.7,197.9 L295.8,197.6 L305.0,197.8 L314.3,198.1 L323.6,198.9 L332.9,199.8 L342.2,201.0 L351.5,202.3 L360.8,203.8 L370.1,205.3 L379.3,206.9 L388.6,208.4 L397.8,210.2 L407.1,211.9 L416.3,213.7 L425.5,215.4 L434.8,217.1 L444.1,218.7 L453.3,220.3 L462.6,221.8 L471.9,223.4 L481.2,225.0 L490.4,226.8 L499.6,228.7 L508.8,230.6 L518.0,232.6 L527.2,234.5 L536.4,236.4 L545.6,238.4 L554.8,240.3 L564.0,242.1 L573.2,244.0 L582.5,245.9 L591.7,247.7 L600.9,249.6 L610.1,251.5 L619.3,253.3 L628.5,255.2 L637.7,257.1 L646.9,259.1 L656.1,261.0 L665.4,262.9 L674.6,264.8" fill="none" stroke="#c6c8c4" stroke-width="0.5" stroke-opacity="0.9"/>
<path d="M280.8,198.1 L286.6,198.4 L295.6,198.2 L304.7,198.5 L313.9,199.0 L323.1,199.9 L332.3,200.8 L341.5,202.0 L350.7,203.4 L359.9,204.8 L369.1,206.4 L378.2,207.9 L387.4,209.5 L396.5,211.2 L405.7,212.9 L414.8,214.7 L424.0,216.4 L433.1,218.1 L442.3,219.6 L451.5,221.2 L460.6,222.7 L469.8,224.3 L479.0,225.8 L488.1,227.6 L497.2,229.5 L506.3,231.4 L515.4,233.3 L524.5,235.2 L533.6,237.1 L542.7,239.0 L551.8,240.9 L560.9,242.8 L570.1,244.6 L579.2,246.5 L588.3,248.3 L597.4,250.2 L606.5,252.1 L615.6,253.9 L624.7,255.8 L633.8,257.6 L642.9,259.6 L652.1,261.5 L661.2,263.4 L670.3,265.2" fill="none" stroke="#141414" stroke-width="0.5" stroke-opacity="0.9"/>
<path d="M280.8,198.1 L286.6,198.9 L295.4,198.9 L304.5,199.3 L313.6,199.9 L322.6,200.8 L331.7,201.9 L340.8,203.1 L349.9,204.4 L359.0,205.9 L368.1,207.5 L377.1,209.0 L386.2,210.6 L395.2,212.3 L404.3,214.0 L413.3,215.7 L422.4,217.4 L431.4,219.0 L440.5,220.5 L449.6,222.1 L458.6,223.6 L467.7,225.1 L476.8,226.6 L485.8,228.4 L494.8,230.3 L503.8,232.1 L512.8,234.0 L521.8,235.9 L530.8,237.8 L539.8,239.7 L548.9,241.6 L557.9,243.4 L566.9,245.3 L575.9,247.1 L584.9,249.0 L593.9,250.8 L602.9,252.7 L611.9,254.5 L620.9,256.3 L630.0,258.2 L639.0,260.2 L648.0,262.0 L657.0,263.9 L666.0,265.7" fill="none" stroke="#c6c8c4" stroke-width="0.5" stroke-opacity="0.9"/>
<path d="M280.8,198.2 L286.5,199.4 L295.3,199.6 L304.2,200.1 L313.2,200.8 L322.2,201.8 L331.2,202.9 L340.2,204.1 L349.1,205.5 L358.1,207.0 L367.1,208.6 L376.0,210.1 L385.0,211.7 L393.9,213.3 L402.9,215.0 L411.8,216.7 L420.8,218.4 L429.7,220.0 L438.7,221.5 L447.7,223.0 L456.6,224.5 L465.6,226.0 L474.6,227.5 L483.5,229.2 L492.4,231.0 L501.3,232.9 L510.2,234.8 L519.2,236.6 L528.1,238.5 L537.0,240.3 L545.9,242.2 L554.8,244.0 L563.7,245.9 L572.6,247.7 L581.5,249.6 L590.4,251.4 L599.3,253.2 L608.2,255.1 L617.2,256.9 L626.1,258.8 L635.0,260.7 L643.9,262.5 L652.8,264.4 L661.7,266.2" fill="none" stroke="#141414" stroke-width="0.5" stroke-opacity="0.9"/>
<path d="M280.8,198.2 L286.4,199.9 L295.1,200.3 L304.0,200.9 L312.8,201.7 L321.7,202.8 L330.6,203.9 L339.5,205.2 L348.3,206.6 L357.2,208.1 L366.1,209.7 L374.9,211.2 L383.8,212.7 L392.6,214.4 L401.5,216.0 L410.3,217.7 L419.2,219.3 L428.0,220.9 L436.9,222.4 L445.8,223.9 L454.7,225.4 L463.5,226.8 L472.4,228.3 L481.2,230.0 L490.1,231.8 L498.9,233.7 L507.7,235.5 L516.5,237.3 L525.3,239.2 L534.1,241.0 L542.9,242.8 L551.7,244.7 L560.5,246.5 L569.3,248.3 L578.1,250.2 L586.9,252.0 L595.8,253.8 L604.6,255.7 L613.4,257.5 L622.2,259.3 L631.0,261.2 L639.8,263.1 L648.6,264.9 L657.4,266.7" fill="none" stroke="#c6c8c4" stroke-width="0.5" stroke-opacity="0.9"/>
<path d="M280.8,198.2 L286.4,200.4 L295.0,200.9 L303.7,201.7 L312.5,202.6 L321.2,203.7 L330.0,204.9 L338.8,206.3 L347.6,207.7 L356.3,209.2 L365.1,210.7 L373.8,212.3 L382.6,213.8 L391.3,215.4 L400.1,217.1 L408.8,218.7 L417.6,220.3 L426.3,221.9 L435.1,223.3 L443.9,224.8 L452.7,226.2 L461.4,227.7 L470.2,229.2 L479.0,230.8 L487.7,232.6 L496.4,234.4 L505.1,236.2 L513.8,238.0 L522.5,239.9 L531.2,241.7 L539.9,243.5 L548.6,245.3 L557.3,247.1 L566.0,249.0 L574.7,250.8 L583.5,252.6 L592.2,254.4 L600.9,256.2 L609.6,258.1 L618.3,259.9 L627.0,261.8 L635.7,263.6 L644.4,265.4 L653.1,267.1" fill="none" stroke="#141414" stroke-width="0.5" stroke-opacity="0.9"/>
<path d="M280.8,198.3 L286.3,200.9 L294.8,201.6 L303.4,202.5 L312.1,203.5 L320.8,204.7 L329.4,205.9 L338.1,207.3 L346.8,208.8 L355.4,210.3 L364.1,211.8 L372.7,213.4 L381.4,214.9 L390.0,216.5 L398.7,218.1 L407.3,219.7 L416.0,221.3 L424.6,222.8 L433.3,224.3 L442.0,225.7 L450.7,227.1 L459.4,228.6 L468.0,230.0 L476.7,231.6 L485.3,233.4 L493.9,235.2 L502.5,237.0 L511.1,238.8 L519.7,240.5 L528.3,242.3 L536.9,244.1 L545.6,245.9 L554.2,247.8 L562.8,249.6 L571.4,251.4 L580.0,253.2 L588.6,255.0 L597.2,256.8 L605.8,258.6 L614.4,260.5 L623.0,262.3 L631.6,264.1 L640.2,265.8 L648.8,267.6" fill="none" stroke="#c6c8c4" stroke-width="0.5" stroke-opacity="0.9"/>
<path d="M280.8,197.5 L287.8,189.8 L298.4,186.5 L309.3,184.7 L320.2,183.3 L331.3,183.1 L342.4,183.1 L353.4,183.7" fill="none" stroke="#2c2c2c" stroke-width="0.7"/>
<path d="M330,182.8 L360,184 Q385,187 410,191 L460,201 L516,211 L600,229 L700,247.5 L770,263.5 L745,258.3 L700,250.4 L600,233.6 L516,214.7 L460,203.4 L410,192.5 Q385,188.2 360,185 Z" fill="#141414"/>
<path d="M400,189 L460,201 L516,211 L600,229 L700,247.5 L745,257 L690,251.5 Q662,249.5 640,255 Q626,259 622,266 L622.5,270.5 L600,266 L550,255 L516,247.5 L460,236 L400,226.5 Z" fill="url(#wdark)"/>
<!-- airfoil cap -->
<path d="M622,267 Q624,259 640,255 Q662,249.5 690,251.5 Q720,253.5 745,257.5 L819,276 L756,275.3 L660,274.6 Q636,274 628,271.5 Q622,270 622,267 Z" fill="#85857a" stroke="#2a2a28" stroke-width="0.5"/>
<!-- yellow overlay over cap part inside plane -->
<!-- orange plane -->
<g fill="#f7cf8a" fill-opacity="0.2">
<polygon points="482.5,190.2 494.5,192 494.5,231 482.5,231"/><polygon points="500.2,192.3 533.8,192.3 533.8,231 500.2,231"/>
</g>
<line x1="495.7" y1="187.5" x2="495.7" y2="197" stroke="#4a4ac8" stroke-width="1" stroke-dasharray="2 1"/>
<line x1="495.7" y1="197" x2="495.7" y2="229.5" stroke="#4848c0" stroke-width="1.1"/>
<line x1="499" y1="232.4" x2="533" y2="231.4" stroke="#d9774a" stroke-width="0.5" stroke-opacity="0.8"/>
<circle cx="495.8" cy="232.3" r="1" fill="#ddd"/>
<!-- sketch points -->
<g fill="#5a4c8c" stroke="none">
<circle cx="314.5" cy="297.5" r="1.7"/><circle cx="345" cy="289.5" r="1.7"/><circle cx="385.5" cy="284.8" r="1.7"/><circle cx="421.5" cy="270" r="1.7"/>
<circle cx="306.7" cy="309.6" r="1.7"/><circle cx="306.7" cy="355" r="1.7"/><circle cx="316" cy="367" r="1.7"/><circle cx="723.2" cy="370" r="1.7"/><circle cx="723.2" cy="260" r="1.1"/>
</g>
<g fill="none" stroke="#a48fdc" stroke-width="0.8">
<circle cx="319" cy="309.5" r="1.6"/><circle cx="319" cy="354.8" r="1.6"/><circle cx="379.8" cy="207.4" r="1.9"/><circle cx="356.5" cy="418" r="1.6"/>
</g>
<path d="M466,237 Q468,240 480,241.5 L516,245" fill="none" stroke="#5b4aa0" stroke-width="1.2" stroke-dasharray="1.2 0.8"/>
<path d="M516,241 L600,241 L644,236.5 L723,260" fill="none" stroke="#8f86b8" stroke-width="0.4"/>
<!-- triad -->
<line x1="747.2" y1="392.6" x2="747.2" y2="367" stroke="#1fd127" stroke-width="2.6"/>
<polygon points="744.3,368.6 750.1,368.6 747.2,360.8" fill="#1fd127"/>
<text x="747.2" y="356" font-size="4.6" fill="#25c52d" text-anchor="middle" font-family="Liberation Sans, sans-serif" font-weight="bold">Y</text>
<line x1="742" y1="399" x2="718" y2="399.4" stroke="#f5301c" stroke-width="2.6"/>
<polygon points="719.4,396.8 719.4,402 711.8,399.5" fill="#f5301c"/>
<text x="705.4" y="401.6" font-size="4.6" fill="#e8452e" text-anchor="middle" font-family="Liberation Sans, sans-serif" font-weight="bold">X</text>
<line x1="746" y1="398.6" x2="737.6" y2="396.3" stroke="#1c34e6" stroke-width="2" stroke-linecap="round"/>
<text x="733" y="397.6" font-size="4.6" fill="#2a40e0" text-anchor="middle" font-family="Liberation Sans, sans-serif" font-weight="bold">Z</text>
<circle cx="747.5" cy="398.8" r="1.8" fill="#fff" stroke="#555" stroke-width="0.6"/>
<!-- mouse cursor -->
<path d="M778.6,340.3 L778.6,346.6 L780.1,345.3 L781.1,347.6 L782,347.2 L781,345 L782.9,344.9 Z" fill="#fff" stroke="#222" stroke-width="0.45"/>
</svg>

<!-- title bar bits -->
<div class="abs" style="left:2px;top:10.5px;width:5.2px;height:6.2px;background:#fbe2bf;border-radius:0.8px;color:#ee8a1c;font-size:5px;line-height:6.4px;font-weight:bold;text-align:center">F</div>
<svg class="abs" style="left:970px;top:9px" width="54" height="10" viewBox="970 9 54 10">
<line x1="975.3" y1="13.6" x2="979.7" y2="13.6" stroke="#333" stroke-width="0.6"/>
<rect x="993" y="12" width="3.6" height="3.4" fill="#fff" stroke="#333" stroke-width="0.7"/><path d="M994,12 V11.2 H997.6 V14.6 H996.6" fill="none" stroke="#333" stroke-width="0.6"/>
<path d="M1011.6,11.3 L1015.9,15.6 M1015.9,11.3 L1011.6,15.6" stroke="#333" stroke-width="0.7"/>
</svg>
<!-- QAT icons -->
<svg class="abs" style="left:0;top:19px" width="80" height="12" viewBox="0 19 80 12">
<g fill="#4a4a4a">
<rect x="3.6" y="22.2" width="1.5" height="1.5"/><rect x="5.6" y="22.2" width="1.5" height="1.5"/><rect x="7.6" y="22.2" width="1.5" height="1.5"/>
<rect x="3.6" y="24.2" width="1.5" height="1.5"/><rect x="5.6" y="24.2" width="1.5" height="1.5"/><rect x="7.6" y="24.2" width="1.5" height="1.5"/>
<rect x="3.6" y="26.2" width="1.5" height="1.5"/><rect x="5.6" y="26.2" width="1.5" height="1.5"/><rect x="7.6" y="26.2" width="1.5" height="1.5"/>
<path d="M17,21.7 H20.3 L22,23.4 V27.9 H17 Z"/>
<path d="M24.6,24 H27 L25.8,25.6 Z"/>
<path d="M35,22 H40.4 V27.8 H35 Z M36,22.8 V24.6 H39.4 V22.8 Z" fill-rule="evenodd"/>
<path d="M57.2,24 H59.4 L58.3,25.5 Z"/>
</g>
<path d="M48.5,24.3 H52 Q53.8,24.5 53.6,26.8 M50.4,22.4 L48.4,24.3 L50.4,26.2" fill="none" stroke="#4a4a4a" stroke-width="0.8"/>
<path d="M70.3,24.3 H67 Q65,24.5 65.2,26.8 M68.4,22.4 L70.4,24.3 L68.4,26.2" fill="none" stroke="#a2a2a2" stroke-width="0.8"/>
<path d="M73.4,24 H75.6 L74.5,25.5 Z" fill="#a2a2a2"/>
</svg>
<!-- doc tab -->
<svg class="abs" style="left:467.6px;top:21.2px" width="8" height="8" viewBox="0 0 8 8"><path d="M0.6,2.2 L3.8,0.8 L7.2,2.2 V5.8 L3.8,7.4 L0.6,5.8 Z" fill="#555"/><path d="M0.6,2.2 L3.8,3.7 L7.2,2.2 M3.8,3.7 V7.4" stroke="#bbb" stroke-width="0.45" fill="none"/><path d="M0.6,2.2 L3.8,0.8 L7.2,2.2 L3.8,3.7 Z" fill="#777"/></svg>
<div class="abs" style="left:477.2px;top:23.2px;font-size:4.6px;line-height:5px;color:#333;white-space:nowrap">Arduino RC Plane v24*</div>
<svg class="abs" style="left:914px;top:22px" width="7" height="7" viewBox="914 22 7 7"><path d="M915.6,23.6 L918.9,26.9 M918.9,23.6 L915.6,26.9" stroke="#555" stroke-width="0.7"/></svg>
<div class="abs" style="left:921.7px;top:19px;width:102.3px;height:12px;background:#c7c7c7"></div>
<svg class="abs" style="left:925px;top:21px" width="8" height="8" viewBox="925 21 8 8"><path d="M926.2,25.1 H931.4 M928.8,22.5 V27.7" stroke="#6a6a6a" stroke-width="0.9"/></svg>
<div class="abs" style="left:936px;top:19px;width:13.3px;height:12px;background:#1c8fe3"></div>
<svg class="abs" style="left:936px;top:19px" width="14" height="12" viewBox="936 19 14 12"><circle cx="942.6" cy="25" r="2.5" fill="none" stroke="#fff" stroke-width="1.2"/><path d="M940,27.8 L942.4,25.2" stroke="#fff" stroke-width="1.1"/><circle cx="942.7" cy="24.8" r="0.7" fill="#fff"/></svg>
<svg class="abs" style="left:952px;top:21px" width="8" height="8" viewBox="0 0 8 8"><circle cx="3.6" cy="4" r="2.5" fill="#555"/><path d="M3.6,2.6 V4.1 H4.9" stroke="#c7c7c7" stroke-width="0.6" fill="none"/></svg>
<div class="abs" style="left:1013.8px;top:22px;width:6px;height:6px;border-radius:3px;background:#555;color:#c7c7c7;font-size:4.8px;line-height:6px;font-weight:bold;text-align:center">?</div>
<!-- ribbon tabs -->
<div class="abs tab" style="left:57.6px;top:33px;color:#2b94dc">MILLING</div>
<div class="abs" style="left:53px;top:38.4px;width:25px;height:1.2px;background:#48a0e2"></div>
<div class="abs tab" style="left:90.8px;top:33px">TURNING</div>
<div class="abs tab" style="left:125.8px;top:33px">ADDITIVE</div>
<div class="abs tab" style="left:163.2px;top:33px">PROBING</div>
<div class="abs tab" style="left:200.8px;top:33px">FABRICATION</div>
<div class="abs tab" style="left:245.2px;top:33px">UTILITIES</div>
<!-- workspace button -->
<div class="abs" style="left:4.2px;top:35.3px;width:42.6px;height:24.2px;background:#f5f5f5;border:0.6px solid #e3e3e3;border-radius:2px"></div>
<div class="abs" style="left:8px;top:44.8px;font-size:3.9px;line-height:5px;font-weight:bold;color:#333;white-space:nowrap;letter-spacing:0.02px">MANUFACTURE</div>
<svg class="abs" style="left:40.8px;top:46.4px" width="3" height="2" viewBox="0 0 3 2"><path d="M0.3,0.2 H2.5 L1.4,1.7 Z" fill="#333"/></svg>
<!-- group labels -->
<div class="abs grp" style="left:58.2px;top:57px">SETUP ▾</div>
<div class="abs grp" style="left:108.8px;top:57px">2D ▾</div>
<div class="abs grp" style="left:182.6px;top:57px">3D ▾</div>
<div class="abs grp" style="left:241px;top:57px">DRILLING ▾</div>
<div class="abs grp" style="left:278px;top:57px">MULTI-AXIS ▾</div>
<div class="abs grp" style="left:326px;top:57px">ACTIONS ▾</div>
<div class="abs grp" style="left:373.5px;top:57px">MANAGE ▾</div>
<div class="abs grp" style="left:409.8px;top:57px">INSPECT ▾</div>
<div class="abs grp" style="left:441.5px;top:57px">SELECT ▾</div>
<div class="abs sep" style="left:86.3px"></div><div class="abs sep" style="left:142.3px"></div><div class="abs sep" style="left:232.3px"></div><div class="abs sep" style="left:272px"></div><div class="abs sep" style="left:309px"></div><div class="abs sep" style="left:365px"></div><div class="abs sep" style="left:404.4px"></div><div class="abs sep" style="left:435px"></div>
<!-- ribbon icons -->
<svg class="abs" style="left:48px;top:40px" width="420" height="18" viewBox="48 40 420 18">
<rect x="51" y="41" width="15.6" height="15" fill="#1c8fe3"/>
<path d="M53.6,44.6 H57.4 L58.4,45.8 H62.6 V47.4 H64.8 L62.8,53.2 H53.6 Z" fill="#c3d3df" stroke="#eaf2f8" stroke-width="0.5"/>
<path d="M53.6,53.2 L55.8,47.6 H64.8 L62.8,53.2 Z" fill="#d9e2e8" stroke="#f2f6f9" stroke-width="0.4"/>
<rect x="70.3" y="41.8" width="10.4" height="13" fill="#f9f9f9" stroke="#8a8a8a" stroke-width="0.6"/>
<text x="75.5" y="47" font-size="3.8" font-weight="bold" fill="#2b8fd8" text-anchor="middle" font-family="Liberation Sans, sans-serif">G</text>
<path d="M73.2,49.7 H79.4 M73.2,52.5 H79.4" stroke="#c4c4c4" stroke-width="1.3"/><rect x="71.6" y="49" width="1.2" height="1.2" fill="#333"/><rect x="71.6" y="51.8" width="1.2" height="1.2" fill="#333"/>
<!-- 2D -->
<path d="M91.4,48.6 L100.6,42.4 L104.6,46.6 L95.4,53.6 Z" fill="#2b8fd8" stroke="#777" stroke-width="0.6"/><path d="M92.8,50 L102,43.8 M94.2,51.6 L103.4,45.2" stroke="#cfe6f8" stroke-width="0.6"/><path d="M91.4,48.6 Q90.6,51 92.6,52.6 L95.4,53.6" fill="none" stroke="#777" stroke-width="0.6"/>
<path d="M108.5,48 L114.5,42.5 L120.5,48 L114.5,53.5 Z" fill="#f4f4f4" stroke="#555" stroke-width="0.6"/><path d="M111,48.6 L114.5,45.5 L118,48.6 L114.5,51.6 Z" fill="#2b8fd8"/>
<path d="M126,49.6 L132,54 L138,49.6" fill="none" stroke="#7fbdee" stroke-width="1.1"/><path d="M125.8,47.2 L132,42.4 L138.2,47.2 L132,51.8 Z" fill="#f9fbfd" stroke="#c9dbea" stroke-width="0.4"/><path d="M125.8,47.4 L132,52 L138.2,47.4" fill="none" stroke="#2b8fd8" stroke-width="1.3"/>
<!-- 3D -->
<path d="M148,43.2 H159 V51.4 L156.4,54 H148 Z" fill="#d0d0d0" stroke="#666" stroke-width="0.6"/><path d="M150.2,44.6 H158.2 V50.6 L156.6,52 H150.2 Z" fill="#3f95df"/><path d="M151,46.4 H157.6 M151,48.2 H157.6 M151,50 H156.6" stroke="#1d4f82" stroke-width="0.6"/>
<path d="M165.5,50 L172,46 L176,49 L169.5,53 Z" fill="#e2e2e2" stroke="#999" stroke-width="0.4"/><circle cx="172.6" cy="45.6" r="3.1" fill="#2b8fd8"/><circle cx="172.6" cy="45.6" r="1.2" fill="#fff"/>
<path d="M182.4,44.4 L185.4,41.8 H195 V51 L192,53.8 H182.4 Z" fill="#e6e6e6" stroke="#555" stroke-width="0.5"/><path d="M183.4,45.4 H192 V52.8 H183.4 Z" fill="#3f95df"/><path d="M185,52.5 L187.4,45.6 M187.6,52.5 L190,45.6 M190.2,52.5 L192,47" stroke="#d8ebfa" stroke-width="0.7"/>
<path d="M199.5,50 Q199.5,43 205.5,43 Q211.5,43 211.5,50 Q205.5,53.5 199.5,50 Z" fill="#2b8fd8" stroke="#1d5f98" stroke-width="0.4"/><ellipse cx="205.5" cy="50.2" rx="6" ry="1.8" fill="#d8d8d8" stroke="#777" stroke-width="0.4"/>
<path d="M216,52.5 L219,47.5 L221,47 L222,43.5 L224,43.5 L225,47 L227,48 L229,52.5 Z" fill="#2b8fd8" stroke="#1d5f98" stroke-width="0.4"/><path d="M217.5,50.5 H227.5 M219.5,48.3 H226" stroke="#cfe6f8" stroke-width="0.5"/>
<!-- drilling -->
<path d="M237.5,49 L244,45.5 L250,48.5 L243.5,52.5 Z" fill="#e4e4e4" stroke="#888" stroke-width="0.5"/><rect x="242.6" y="41.5" width="2.6" height="8" rx="0.8" fill="#bbb" stroke="#666" stroke-width="0.4"/>
<path d="M256,50 L262,47 L266,49.5 L260,52.8 Z" fill="#e4e4e4" stroke="#aaa" stroke-width="0.4"/><circle cx="264.5" cy="45.5" r="2.9" fill="#2b8fd8"/><circle cx="264.5" cy="45.5" r="1.1" fill="#fff"/><path d="M257,45 L259,43 M258,47 L260,45" stroke="#aaa" stroke-width="0.5"/>
<!-- multi-axis -->
<path d="M284.5,46 L288,43.5 L292,45 V49 L288.5,51.5 L284.5,50 Z" fill="#8b9aa8" stroke="#566" stroke-width="0.4"/><path d="M288,48 L292,45.5 L296,47.5 V51 L292,53.5 L288,51.5 Z" fill="#2b8fd8" stroke="#1d5f98" stroke-width="0.4"/><path d="M289.5,42 L291.5,44.5" stroke="#555" stroke-width="0.9"/>
<!-- actions -->
<path d="M315,48 L320.5,42.6 L326,48 L320.5,53.4 Z" fill="#eaf4fc" stroke="#2b8fd8" stroke-width="0.7"/><path d="M320.5,42 V48.5" stroke="#666" stroke-width="1.4"/><circle cx="320.5" cy="49" r="1" fill="#2b8fd8"/>
<rect x="332.2" y="41.8" width="10.6" height="12.4" fill="#eef3f8" stroke="#999" stroke-width="0.6"/><text x="337.5" y="47.2" font-size="4.3" font-weight="bold" fill="#2b8fd8" text-anchor="middle" font-family="Liberation Sans, sans-serif">G1</text><text x="337.5" y="51.8" font-size="4.3" font-weight="bold" fill="#2b8fd8" text-anchor="middle" font-family="Liberation Sans, sans-serif">G2</text>
<rect x="350" y="42.2" width="9.6" height="11.4" fill="#fafafa" stroke="#777" stroke-width="0.6"/><rect x="352" y="44" width="5.6" height="2.6" fill="none" stroke="#888" stroke-width="0.5"/><path d="M352,48.6 H357.6 M352,50.4 H357.6" stroke="#999" stroke-width="0.5"/>
<!-- manage -->
<path d="M370.4,42.4 H374.4 L375.4,44 H381.6 V53.6 H370.4 Z" fill="#f6f6f6" stroke="#8c8c8c" stroke-width="0.6"/><rect x="375.6" y="46.4" width="2" height="6.2" fill="#999"/><rect x="374.6" y="45.4" width="4" height="1.5" rx="0.5" fill="#777"/>
<rect x="387.6" y="43" width="12.4" height="10" rx="1.2" fill="#c9d8e8" stroke="#2a5a9c" stroke-width="0.6"/><rect x="387.9" y="50.2" width="11.8" height="2.8" fill="#1f4f94"/><rect x="390.6" y="45" width="5" height="4.2" fill="#f4f8fc" stroke="#4a80c0" stroke-width="0.4"/><rect x="397" y="45.6" width="1.6" height="3" fill="#7fa6d4"/>
<!-- inspect -->
<rect x="414.2" y="48.2" width="11.2" height="3" fill="#f2a21e"/><path d="M414.4,44 V48 M425.2,44 V48 M414.4,45.6 H425.2" stroke="#555" stroke-width="0.6" fill="none"/>
<!-- select -->
<rect x="444.6" y="42.2" width="10.8" height="8.8" fill="none" stroke="#3aa86a" stroke-width="0.7" stroke-dasharray="1.4 1"/><path d="M453.4,48.6 V54 L454.7,52.9 L455.6,54.8 L456.4,54.4 L455.5,52.6 L457.1,52.5 Z" fill="#fff" stroke="#333" stroke-width="0.4"/>
</svg>
<!-- browser -->
<svg class="abs" style="left:2px;top:66px" width="120" height="8" viewBox="2 66 120 8"><path d="M4.6,70.2 L6.2,69 V71.4 Z M6.4,69 L8,70.2 L6.4,71.4 Z" fill="#333" transform="translate(0,0)"/><rect x="5.8" y="69.8" width="1.4" height="0.8" fill="#333"/><circle cx="116.2" cy="70.3" r="1.5" fill="#333"/><rect x="119.8" y="68.6" width="0.6" height="3.6" fill="#999"/></svg>
<div class="abs" style="left:13px;top:67.6px;font-size:3.9px;line-height:5px;color:#555;letter-spacing:0.02px">BROWSER</div>
<svg class="abs" style="left:0;top:76px" width="125" height="60" viewBox="0 76 125 60">
<g fill="#f0f0f0"><rect x="16" y="77.6" width="69.6" height="7.4"/><rect x="23.5" y="87.4" width="35" height="7.2"/><rect x="23.5" y="97" width="43.5" height="7.2"/><rect x="23.5" y="106.6" width="40.5" height="7.2"/><rect x="23.5" y="116.2" width="30.5" height="7.2"/><rect x="30.6" y="125.8" width="42" height="7.2"/></g>
<rect x="40.6" y="125.8" width="22.4" height="7.2" fill="#a9d4f5"/>
<!-- expanders -->
<path d="M12.6,78.8 V83.4 H8.2 Z" fill="#444"/><path d="M20.2,117.4 V122 H15.8 Z" fill="#444"/>
<path d="M16.8,98 L19.6,100.6 L16.8,103.2 Z" fill="none" stroke="#444" stroke-width="0.6"/><path d="M16.8,107.6 L19.6,110.2 L16.8,112.8 Z" fill="none" stroke="#444" stroke-width="0.6"/>
<!-- eyes -->
<g fill="none" stroke="#888" stroke-width="0.5"><path d="M18,81.4 Q20.6,78.8 23.2,81.4 Q20.6,84 18,81.4 Z"/><path d="M25.2,110.2 Q27.8,107.6 30.4,110.2 Q27.8,112.8 25.2,110.2 Z"/></g><circle cx="20.6" cy="81.4" r="0.9" fill="#888"/><circle cx="27.8" cy="110.2" r="0.9" fill="#888"/>
<!-- doc icons -->
<g fill="#fff" stroke="#555" stroke-width="0.6"><path d="M27.4,79 H31.2 L33,80.8 V84 H27.4 Z"/><path d="M34.6,107.8 H38.4 L40.2,109.6 V112.8 H34.6 Z"/></g>
<path d="M24.6,88.6 H28.4 L29.8,90 V93.6 H24.6 Z" fill="#fff" stroke="#555" stroke-width="0.6"/><rect x="24.6" y="92.2" width="5.2" height="1.6" fill="#e7a32a"/>
<rect x="24.6" y="98.4" width="5.8" height="4.2" fill="#aaa"/><rect x="24.6" y="98.4" width="5.8" height="1" fill="#888"/>
<path d="M24.8,118 H27 L27.6,118.8 H30 V122 H24.8 Z M24.8,122 L25.8,119.8 H30.8 L30,122" fill="#fff" stroke="#555" stroke-width="0.5"/>
<path d="M31.8,127.6 H34 L34.6,128.4 H37 V131.6 H31.8 Z M31.8,131.6 L32.8,129.4 H37.8 L37,131.6" fill="#fff" stroke="#555" stroke-width="0.5"/>
<circle cx="67.4" cy="129.4" r="1.9" fill="#fff" stroke="#555" stroke-width="0.5"/><circle cx="67.4" cy="129.4" r="0.8" fill="#555"/>
</svg>
<div class="abs pl" style="left:39.6px;top:78.9px">Arduino RC Plane v28</div>
<div class="abs pl" style="left:36.2px;top:88.5px">Units: mm</div>
<div class="abs pl" style="left:36.4px;top:98.1px">Named Views</div>
<div class="abs pl" style="left:46.4px;top:107.7px">Models</div>
<div class="abs pl" style="left:36.4px;top:117.3px">Setups</div>
<div class="abs pl" style="left:43.8px;top:126.9px;font-weight:bold;color:#1b4f86">Setup6</div>
<!-- comments bar -->
<div class="abs" style="left:0;top:557.4px;width:121px;height:9.6px;background:#f6f6f6;border-right:0.6px solid #d4d4d4"></div>
<div class="abs" style="left:12px;top:559.6px;font-size:3.7px;line-height:5px;color:#666;white-space:nowrap">COMMENTS</div>
<div class="abs" style="left:114.4px;top:561.2px;width:2.4px;height:2.4px;border-radius:1.2px;background:#333"></div>
<!-- nav bar -->
<div class="abs" style="left:447px;top:557.6px;width:129.4px;height:9.4px;background:#f3f3f3"></div>
<svg class="abs" style="left:447px;top:557px" width="128" height="10" viewBox="447 557 128 10">
<g stroke="#555" stroke-width="0.6" fill="none">
<path d="M451.6,559.2 V565 M448.8,562.2 H454.4"/><circle cx="451.6" cy="562.2" r="1" fill="#555"/>
<rect x="462.4" y="560.4" width="4.8" height="3.8" fill="#999"/><path d="M463.6,560.4 V559.4 H466 V560.4"/>
<path d="M473.6,564.6 V561 Q473.6,560.2 474.3,560.2 V559.6 H475 V559.2 H475.8 V559.6 H476.6 V560.2 H477.3 V564 L476.4,565 H474.4 Z" fill="#ddd"/>
<circle cx="484.8" cy="561.6" r="1.9"/><path d="M486.2,563 L488,564.8"/><path d="M487.4,559.4 H488.6 M488,558.8 V560"/>
<circle cx="495.4" cy="561.6" r="1.9"/><path d="M496.8,563 L498.6,564.8"/>
<rect x="509.8" y="559.6" width="5.8" height="4" fill="#4a7ec0"/><path d="M511.4,565 H514.2"/>
<rect x="521.6" y="559.4" width="5.4" height="5.2" fill="#8a8a8a"/><path d="M521.6,561.2 H527 M523.4,559.4 V564.6" stroke="#ccc" stroke-width="0.4"/>
<rect x="537" y="560.4" width="4.6" height="4.2" fill="#ccc"/><path d="M538.4,560.4 L539.8,559 H543 V562.8 L541.6,564.6 M541.6,560.4 L543,559"/>
<rect x="549.4" y="560" width="5.6" height="4" fill="#5a8ed0"/><path d="M548.4,562 H556"/>
<path d="M562.4,562 A2.3,2.3 0 1 1 564.7,564.3" stroke="#2b6cb0" stroke-width="0.9"/><path d="M566.6,563 L564.6,565.6 L563.8,563.4 Z" fill="#2b6cb0" stroke="none"/>
</g>
<g fill="#444"><path d="M455.2,561.8 h1.8 l-0.9,1.2 z"/><path d="M500.6,561.8 h1.8 l-0.9,1.2 z"/><path d="M517,561.8 h1.8 l-0.9,1.2 z"/><path d="M528.6,561.8 h1.8 l-0.9,1.2 z"/><path d="M544,561.8 h1.8 l-0.9,1.2 z"/><path d="M556.6,561.8 h1.8 l-0.9,1.2 z"/><path d="M569,561.8 h1.8 l-0.9,1.2 z"/></g>
</svg>
<!-- logo -->
<svg class="abs" style="left:0;top:495px" width="200" height="81" viewBox="0 495 200 81">
<defs>
<linearGradient id="lg1" x1="0" y1="0" x2="0" y2="1"><stop offset="0" stop-color="#5a9fd6"/><stop offset="0.5" stop-color="#7cb8e4"/><stop offset="1" stop-color="#a6d2f0"/></linearGradient>
<linearGradient id="lg2" x1="0" y1="0" x2="1" y2="0"><stop offset="0" stop-color="#8cc0e6"/><stop offset="1" stop-color="#6aa9db"/></linearGradient>
<pattern id="bin" width="16" height="3.4" patternUnits="userSpaceOnUse"><text x="0" y="2.8" font-size="3.1" font-family="Liberation Mono, monospace" fill="#2f6fb0" font-weight="bold">10100101</text></pattern>
</defs>
<!-- M -->
<path d="M22.4,500.1 L37.8,511.8 L53,500.1 L53,515 L42.5,528.2 L34.3,528.2 L22.4,513.2 Z" fill="#5b9bd5" stroke="#4a86bf" stroke-width="0.4"/>
<rect x="6.3" y="500.1" width="16.1" height="56.8" fill="url(#lg2)" stroke="#5b9bd5" stroke-width="0.4"/>
<rect x="53" y="500.1" width="16.4" height="56.8" fill="#a4cdeb" stroke="#6aa9db" stroke-width="0.4"/>
<rect x="54" y="500.8" width="15" height="55" fill="url(#bin)"/>
<rect x="34" y="514.6" width="7" height="9.2" fill="#4a4f55" stroke="#cfe2f2" stroke-width="0.5"/>
<rect x="35.4" y="516" width="4.2" height="6.4" fill="#6d737a"/>
<!-- mech parts -->
<rect x="11.6" y="507" width="5.8" height="3.4" fill="#f3efe2" stroke="#8a8676" stroke-width="0.3"/>
<rect x="12.6" y="510.4" width="3.8" height="9.6" fill="#f6f3ea" stroke="#9a968a" stroke-width="0.3"/>
<path d="M14.4,502 V507 M13,504.6 H19" stroke="#eee" stroke-width="0.5"/>
<circle cx="14.3" cy="527.6" r="5.7" fill="#ebe4cf" stroke="#a79f86" stroke-width="0.4"/><circle cx="14.3" cy="527.6" r="1" fill="#8fb8d8"/>
<path d="M9,530 L11.4,541.6 M19.8,529.6 L19.8,542" stroke="#555" stroke-width="0.5"/>
<circle cx="15.6" cy="544.2" r="4.5" fill="#9aa2aa" stroke="#555" stroke-width="0.6"/><circle cx="15.6" cy="544.2" r="2.4" fill="#c4cad0" stroke="#777" stroke-width="0.3"/>
<circle cx="10.2" cy="551" r="2" fill="#a9b4be" stroke="#667" stroke-width="0.4"/>
<!-- text -->
<g font-family="Liberation Sans, sans-serif" font-weight="bold" fill="url(#lg1)" stroke="url(#lg1)" stroke-width="1.3" stroke-linejoin="round">
<text x="93.4" y="524.6" font-size="30" textLength="63.6" lengthAdjust="spacingAndGlyphs">How To</text>
<text x="95" y="524.6" font-size="30" textLength="63.6" lengthAdjust="spacingAndGlyphs">How To</text>
<text x="70" y="557" font-size="28" textLength="116.6" lengthAdjust="spacingAndGlyphs">ECHATRONICS</text>
<text x="71.8" y="557" font-size="28" textLength="116.6" lengthAdjust="spacingAndGlyphs">ECHATRONICS</text>
</g>
<g font-family="Liberation Sans, sans-serif" font-weight="bold" fill="none" stroke="#3c7fbd" stroke-width="0.35" stroke-opacity="0.55">
<text x="95.4" y="525" font-size="30" textLength="63.6" lengthAdjust="spacingAndGlyphs">How To</text>
<text x="72.2" y="557.4" font-size="28" textLength="116.6" lengthAdjust="spacingAndGlyphs">ECHATRONICS</text>
</g>
<text x="7" y="571.2" font-family="Liberation Mono, monospace" font-size="11.6" textLength="183" lengthAdjust="spacing" fill="#3c3c3c" stroke="#f0f0f0" stroke-width="1.4" stroke-opacity="0.7" paint-order="stroke">www.HowToMechatronics.com</text>
</svg>

<div class="abs" id="panel">
<!-- header -->
<div class="abs" style="left:0;top:0;width:100.5px;height:10.5px;background:#f4f4f4"></div>
<svg class="abs" style="left:0;top:0" width="100" height="11" viewBox="0 0 100 11"><rect x="1.2" y="3.2" width="0.5" height="3.6" fill="#777"/><circle cx="6.6" cy="5.1" r="1.7" fill="#222"/><rect x="5.6" y="4.8" width="2" height="0.6" fill="#f4f4f4"/><path d="M94.2,3.9 L96,5.1 L94.2,6.3 Z M96,3.9 L97.8,5.1 L96,6.3 Z" fill="#333"/></svg>
<div class="abs" style="left:10.6px;top:2.6px;font-size:3.9px;line-height:5px;color:#444;white-space:nowrap">SETUP : SETUP6</div>
<!-- tabs -->
<div class="abs" style="left:0;top:10.5px;width:100.5px;height:11px;background:#ededed;border-bottom:0.6px solid #d0d0d0"></div>
<div class="abs" style="left:0.5px;top:10.5px;width:27px;height:11.4px;background:#f6f6f6;border:0.6px solid #d0d0d0;border-bottom:none"></div>
<div class="abs" style="left:53px;top:11px;width:0.6px;height:10px;background:#d0d0d0"></div>
<div class="abs" style="left:94px;top:11px;width:0.6px;height:10px;background:#d0d0d0"></div>
<svg class="abs" style="left:0;top:10.5px" width="100" height="12" viewBox="0 10.5 100 12">
<path d="M3.2,15.6 L4.4,13.2 H9 L7.8,15.6 Z M3.2,15.6 H7.8 V18.6 H3.2 Z M7.8,15.6 L9,13.2 V16.4 L7.8,18.6 Z" fill="#fff" stroke="#2b6cb0" stroke-width="0.5" stroke-linejoin="round"/>
<path d="M30,14.6 L31.4,13.2 H35.6 V17.6 L34.2,19 H30 Z" fill="#e8b81e" stroke="#a27c0c" stroke-width="0.4"/><path d="M30,14.6 H34.2 V19 M34.2,14.6 L35.6,13.2" fill="none" stroke="#a27c0c" stroke-width="0.4"/>
<rect x="56.4" y="13" width="4.6" height="6" fill="#dbe9f6" stroke="#2b6cb0" stroke-width="0.6"/><text x="58.7" y="17.4" font-size="3" fill="#2b6cb0" text-anchor="middle" font-family="Liberation Sans, sans-serif">G</text>
</svg>
<div class="abs pl" style="left:12.2px;top:13.6px">Setup</div>
<div class="abs pl" style="left:38.4px;top:13.6px">Stock</div>
<div class="abs pl" style="left:64.4px;top:13.6px">Post Process</div>
<!-- Machine -->
<svg class="abs" style="left:4.4px;top:26.6px" width="4" height="3" viewBox="0 0 4 3"><path d="M0.1,0.3 H3.3 L1.7,2.7 Z" fill="#222"/></svg>
<div class="abs ph" style="left:10.4px;top:25.2px">Machine</div>
<div class="abs pl" style="left:6px;top:39.6px">Machine</div>
<div class="abs box" style="left:33.6px;top:37px;width:18.6px;height:10px;padding:1.4px 0 0 1.4px">Select...</div>
<div class="abs psep" style="top:52px"></div>
<!-- Setup -->
<svg class="abs" style="left:4.4px;top:59px" width="4" height="3" viewBox="0 0 4 3"><path d="M0.1,0.3 H3.3 L1.7,2.7 Z" fill="#222"/></svg>
<div class="abs ph" style="left:10.4px;top:57.6px">Setup</div>
<div class="abs pl" style="left:6px;top:70.2px">Operation Type</div>
<div class="abs box" style="left:40.8px;top:68px;width:54.2px;height:9.6px;padding:1.1px 0 0 2.6px">Milling</div>
<svg class="abs" style="left:90px;top:72px" width="3" height="2" viewBox="0 0 3 2"><path d="M0.2,0.1 H2.6 L1.4,1.8 Z" fill="#111"/></svg>
<div class="abs psep" style="top:80.2px"></div>
<!-- WCS -->
<svg class="abs" style="left:4.4px;top:87.2px" width="4" height="3" viewBox="0 0 4 3"><path d="M0.1,0.3 H3.3 L1.7,2.7 Z" fill="#222"/></svg>
<div class="abs ph" style="left:10.4px;top:85.8px">Work Coordinate System (WCS)</div>
<div class="abs pl" style="left:6px;top:98.2px">Orientation</div>
<div class="abs box" style="left:40.8px;top:96px;width:54.2px;height:9.6px;padding:1.1px 0 0 2.6px">Select X &amp; Y axes</div>
<svg class="abs" style="left:90px;top:100px" width="3" height="2" viewBox="0 0 3 2"><path d="M0.2,0.1 H2.6 L1.4,1.8 Z" fill="#111"/></svg>
<div class="abs pl" style="left:6px;top:110.4px">X Axis</div>
<div class="abs" style="left:40.8px;top:108px;width:11.8px;height:10px;background:#1c8fe3"></div>
<svg class="abs" style="left:44px;top:109.6px" width="6" height="7" viewBox="0 0 6 7"><path d="M1.6,0.8 V5.6 L2.8,4.6 L3.6,6.3 L4.3,6 L3.5,4.3 L5,4.2 Z" fill="#fff" stroke="#124" stroke-width="0.3"/></svg>
<div class="abs pl" style="left:6px;top:122px">Flip X Axis</div>
<svg class="abs" style="left:42.6px;top:121.4px" width="7" height="7" viewBox="0 0 7 7"><rect x="0.8" y="1" width="4.4" height="4.4" rx="0.8" fill="#fff" stroke="#444" stroke-width="0.7"/><path d="M1.7,3.3 L2.8,4.5 L4.9,1.4" fill="none" stroke="#222" stroke-width="0.9"/></svg>
<div class="abs pl" style="left:6px;top:134.2px">Y Axis</div>
<div class="abs box" style="left:40.8px;top:132px;width:41.8px;height:9px;padding:1.5px 0 0 7.8px;font-size:4.25px">Sketch Segment</div>
<svg class="abs" style="left:43px;top:133px" width="6" height="7" viewBox="0 0 6 7"><path d="M1.2,0.8 V5.2 L2.3,4.3 L3,5.9 L3.7,5.6 L3,4 L4.4,3.9 Z" fill="#fff" stroke="#333" stroke-width="0.4"/></svg>
<svg class="abs" style="left:86.6px;top:134.0px" width="5" height="5" viewBox="0 0 5 5"><path d="M1,1 L4,4 M4,1 L1,4" stroke="#222" stroke-width="0.85"/></svg>
<div class="abs pl" style="left:6px;top:145.6px">Flip Y Axis</div>
<svg class="abs" style="left:42.6px;top:145px" width="7" height="7" viewBox="0 0 7 7"><rect x="0.6" y="0.8" width="5" height="5" rx="1.1" fill="#e9e9e9" stroke="#8a8a8a" stroke-width="0.5"/></svg>
<div class="abs pl" style="left:6px;top:158.4px">Origin</div>
<div class="abs box" style="left:40.8px;top:155.7px;width:54.2px;height:9.6px;padding:1.1px 0 0 2.6px">Selected point</div>
<svg class="abs" style="left:90px;top:159.8px" width="3" height="2" viewBox="0 0 3 2"><path d="M0.2,0.1 H2.6 L1.4,1.8 Z" fill="#111"/></svg>
<div class="abs pl" style="left:6px;top:170.2px">WCS Origin</div>
<div class="abs box" style="left:40.8px;top:168px;width:34.8px;height:9px;padding:1.5px 0 0 7.8px;font-size:4.25px">Sketch Point</div>
<svg class="abs" style="left:43px;top:169px" width="6" height="7" viewBox="0 0 6 7"><path d="M1.2,0.8 V5.2 L2.3,4.3 L3,5.9 L3.7,5.6 L3,4 L4.4,3.9 Z" fill="#fff" stroke="#333" stroke-width="0.4"/></svg>
<svg class="abs" style="left:79.0px;top:170.0px" width="5" height="5" viewBox="0 0 5 5"><path d="M1,1 L4,4 M4,1 L1,4" stroke="#222" stroke-width="0.85"/></svg>
<div class="abs psep" style="top:180.2px"></div>
<!-- Model -->
<svg class="abs" style="left:4.4px;top:187.2px" width="4" height="3" viewBox="0 0 4 3"><path d="M0.1,0.3 H3.3 L1.7,2.7 Z" fill="#222"/></svg>
<div class="abs ph" style="left:10.4px;top:185.8px">Model</div>
<div class="abs pl" style="left:6px;top:198.2px">Model</div>
<div class="abs box" style="left:40.8px;top:196px;width:23.8px;height:9px;padding:1.5px 0 0 7.8px;font-size:4.25px">Sketch</div>
<svg class="abs" style="left:43px;top:197px" width="6" height="7" viewBox="0 0 6 7"><path d="M1.2,0.8 V5.2 L2.3,4.3 L3,5.9 L3.7,5.6 L3,4 L4.4,3.9 Z" fill="#fff" stroke="#333" stroke-width="0.4"/></svg>
<svg class="abs" style="left:68.6px;top:198.0px" width="5" height="5" viewBox="0 0 5 5"><path d="M1,1 L4,4 M4,1 L1,4" stroke="#222" stroke-width="0.85"/></svg>
<div class="abs psep" style="top:208.6px"></div>
<!-- Fixture -->
<svg class="abs" style="left:4.6px;top:213.2px" width="7" height="7" viewBox="0 0 7 7"><rect x="0.6" y="0.8" width="4.8" height="4.8" rx="1.1" fill="#e9e9e9" stroke="#8a8a8a" stroke-width="0.5"/></svg>
<div class="abs pl" style="left:13.3px;top:214px">Fixture</div>
<div class="abs" style="left:0;top:229.6px;width:100.5px;height:0.6px;background:#dcdcdc"></div>
<svg class="abs" style="left:4.6px;top:235.8px" width="5" height="5" viewBox="0 0 5 5"><circle cx="2.3" cy="2.3" r="2" fill="#111"/><rect x="2" y="2" width="0.7" height="1.5" fill="#fff"/><rect x="2" y="0.9" width="0.7" height="0.7" fill="#fff"/></svg>
<div class="abs" style="left:43.2px;top:235px;width:24.3px;height:6.8px;border:0.6px solid #c4c4c4;background:#ececec;font-size:4.7px;line-height:5.6px;text-align:center;color:#6c6c6c">OK</div>
<div class="abs" style="left:71.7px;top:235px;width:24.3px;height:6.8px;border:0.6px solid #c4c4c4;background:#ececec;font-size:4.7px;line-height:5.6px;text-align:center;color:#666">Cancel</div>
</div>
<!-- viewcube -->
<svg class="abs" style="left:975px;top:64px" width="49" height="45" viewBox="975 64 49 45">
<ellipse cx="999" cy="102" rx="13" ry="2.6" fill="#e4e4e4"/>
<path d="M987.2,81 L991.7,79.4 V100.6 L987.2,98 Z" fill="#e9e9e9" stroke="#8a8a8a" stroke-width="0.4" stroke-dasharray="1.5 1"/>
<rect x="991.7" y="79.4" width="20.3" height="21.2" fill="#ececec" stroke="#8a8a8a" stroke-width="0.5" stroke-dasharray="2 1.2"/>
<rect x="994" y="82" width="15.6" height="15.6" fill="#e6e7e8"/>
<text x="1001.8" y="91.6" font-size="4" fill="#555" text-anchor="middle" font-family="Liberation Sans, sans-serif" letter-spacing="-0.2">FRONT</text>
<line x1="991.6" y1="76.2" x2="991.6" y2="101" stroke="#7482de" stroke-width="0.7"/>
<line x1="991.6" y1="101" x2="1013.6" y2="100" stroke="#e07a4a" stroke-width="0.8"/>
<line x1="991.6" y1="101" x2="987.5" y2="98.4" stroke="#7ad07a" stroke-width="0.8"/>
<text x="991.6" y="74.6" font-size="5.2" fill="#5a6ad4" text-anchor="middle" font-family="Liberation Sans, sans-serif">Z</text>
<text x="1017" y="101.4" font-size="5" fill="#e07a4a" text-anchor="middle" font-family="Liberation Sans, sans-serif">X</text>
<text x="986" y="98.6" font-size="4.2" fill="#7ad07a" text-anchor="middle" font-family="Liberation Sans, sans-serif">Y</text>
</svg>

</div>
</body>
</html>
